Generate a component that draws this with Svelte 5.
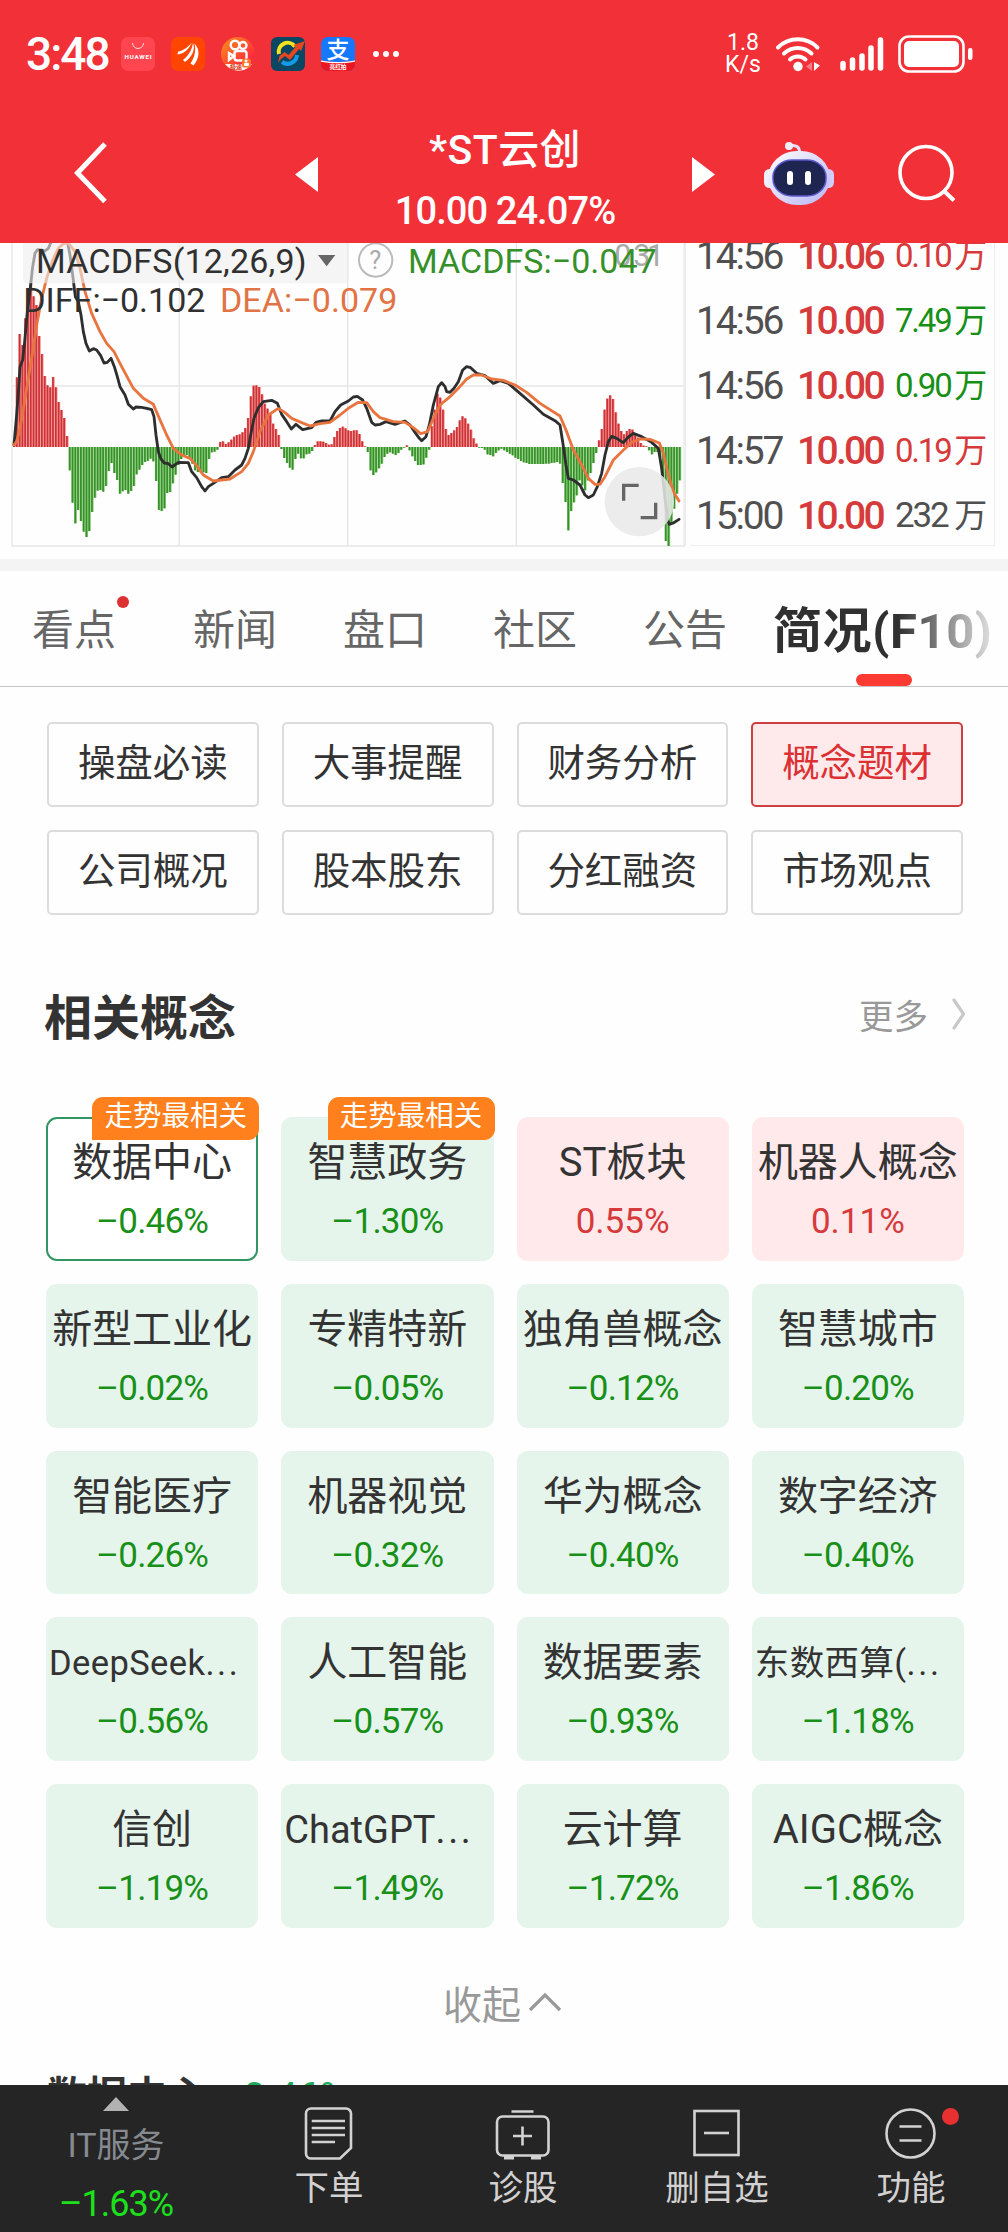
<script>
  // MACD histogram, one value per trading minute
  const bars = [
    20, 209, 339, 306, 386, 446, 491, 452, 426, 333, 279, 213, 185, 179, 210,
    179, 135, 111, 87, 33, -70, -167, -229, -189, -222, -254, -270, -252, -195,
    -152, -131, -129, -134, -117, -72, -48, -78, -99, -140, -133, -129, -140,
    -132, -117, -82, -68, -54, -45, -42, -35, -43, -102, -189, -192, -184, -138,
    -135, -109, -83, -54, -36, -28, -24, -30, -50, -70, -75, -76, -76, -78, -36,
    -16, -14, -8, 15, 17, 9, 14, 22, 31, 36, 38, 44, 57, 87, 152, 184, 185, 180,
    158, 130, 115, 100, 70, 54, 36, -6, -33, -48, -62, -68, -36, -20, -34, -34,
    -22, -20, -12, 6, 17, 17, 16, 12, 7, 8, 30, 48, 57, 61, 56, 50, 48, 50, 50,
    39, 17, 2, -15, -70, -84, -76, -64, -50, -30, -20, -16, -20, -24, -18, -8,
    -2, 5, -10, -28, -42, -54, -54, -52, -32, -8, 62, 112, 160, 148, 112, 54,
    36, 42, 50, 60, 80, 92, 86, 70, 52, 26, 10, -2, -3, -8, -22, -24, -28, -18,
    -10, -5, -10, -15, -20, -25, -32, -36, -42, -46, -48, -51, -51, -51, -51,
    -51, -51, -50, -50, -48, -47, -45, -50, -108, -165, -250, -192, -166, -145,
    -100, -115, -130, -100, -78, -48, -18, 20, 54, 112, 145, 155, 144, 104, 70,
    48, 38, 48, 54, 52, 40, 28, 12, 4, 2, -10, -22, -15, -15, -30, -100, -282,
    -297, -230, -185, -140, -100,
  ];
  const step = 1997 / (bars.length - 1);

  const diff =
    "42,630 50,540 56,460 60,395 68,375 74,320 82,230 92,150 98,95 105,55 112,44 125,45 135,48 145,40 152,24 175,-20 203,24 210,60 218,120 226,185 235,200 243,240 250,290 258,325 268,348 280,341 290,345 302,362 312,384 322,382 333,370 343,395 352,425 360,455 375,480 385,508 400,522 408,516 425,517 440,520 455,524 462,545 468,600 475,650 483,672 493,684 505,686 516,696 535,682 565,683 575,710 590,728 605,755 615,768 625,755 640,745 665,728 685,725 705,705 725,690 735,670 745,640 752,600 762,550 775,518 790,500 815,496 832,505 845,538 860,560 874,582 888,568 908,584 935,578 948,562 965,558 990,558 1005,530 1022,510 1045,498 1060,486 1072,484 1088,495 1100,520 1115,562 1125,570 1140,568 1158,560 1185,568 1215,558 1230,570 1245,592 1258,610 1265,617 1278,605 1288,570 1300,510 1315,455 1325,443 1335,455 1340,470 1350,472 1362,460 1375,440 1388,405 1400,395 1412,398 1430,415 1455,422 1480,445 1500,437 1525,445 1560,475 1600,510 1630,538 1665,557 1680,570 1688,620 1698,690 1705,730 1720,735 1740,750 1755,780 1765,788 1780,780 1792,755 1805,715 1815,660 1825,620 1835,604 1850,610 1870,623 1885,606 1900,595 1925,605 1955,622 1975,640 1985,700 1995,790 2003,855 2008,868 2020,864 2037,853";
  const dea =
    "42,630 50,620 60,580 72,510 85,430 98,350 110,270 125,190 140,130 158,75 175,40 190,26 205,24 225,50 240,100 255,170 275,235 300,290 320,325 342,350 365,395 400,460 430,490 460,508 478,550 500,600 520,640 545,660 570,670 590,692 610,720 640,738 690,732 725,710 745,685 760,650 780,590 805,540 835,520 855,533 875,550 905,563 930,573 960,566 990,562 1020,540 1045,520 1075,502 1100,503 1120,530 1140,548 1180,560 1215,562 1240,578 1262,596 1283,590 1300,550 1320,510 1350,485 1375,460 1400,432 1420,420 1445,420 1475,432 1510,436 1545,450 1580,472 1620,505 1680,543 1700,590 1720,645 1745,690 1765,730 1785,748 1800,748 1815,725 1840,675 1865,650 1895,622 1920,612 1950,613 1978,624 1990,655 2005,720 2020,770 2037,798";

  const ticks = [
    { time: "14:56", price: "10.06", vol: "0.10", dir: "up" },
    { time: "14:56", price: "10.00", vol: "7.49", dir: "down" },
    { time: "14:56", price: "10.00", vol: "0.90", dir: "down" },
    { time: "14:57", price: "10.00", vol: "0.19", dir: "up" },
    { time: "15:00", price: "10.00", vol: "232", dir: "flat" },
  ];

  const tabs = ["看点", "新闻", "盘口", "社区", "公告"];
  const sections = [
    "操盘必读",
    "大事提醒",
    "财务分析",
    "概念题材",
    "公司概况",
    "股本股东",
    "分红融资",
    "市场观点",
  ];

  const concepts = [
    { name: "数据中心", pct: "-0.46%", top: true, selected: true },
    { name: "智慧政务", pct: "-1.30%", top: true },
    { name: "ST板块", pct: "0.55%" },
    { name: "机器人概念", pct: "0.11%" },
    { name: "新型工业化", pct: "-0.02%" },
    { name: "专精特新", pct: "-0.05%" },
    { name: "独角兽概念", pct: "-0.12%" },
    { name: "智慧城市", pct: "-0.20%" },
    { name: "智能医疗", pct: "-0.26%" },
    { name: "机器视觉", pct: "-0.32%" },
    { name: "华为概念", pct: "-0.40%" },
    { name: "数字经济", pct: "-0.40%" },
    { name: "DeepSeek", pct: "-0.56%", fit: "small" },
    { name: "人工智能", pct: "-0.57%" },
    { name: "数据要素", pct: "-0.93%" },
    { name: "东数西算(", pct: "-1.18%", fit: "small" },
    { name: "信创", pct: "-1.19%" },
    { name: "ChatGPT", pct: "-1.49%", fit: "medium" },
    { name: "云计算", pct: "-1.72%" },
    { name: "AIGC概念", pct: "-1.86%" },
  ];
</script>

<div class="screen">
  <header>
    <div class="status">
      <span class="clock">3:48</span>
      <div class="apps">
        <svg width="34" height="34" viewBox="0 0 34 34">
          <rect width="34" height="34" rx="7" fill="#ff4650" />
          <path d="M11.5 6a5.5 5.5 0 0 0 11 0" fill="none" stroke="#ffd5d5" stroke-width="1" />
          <text x="3.5" y="22" font-size="6.2" font-weight="700" fill="#fff" textLength="27">HUAWEI</text>
        </svg>
        <svg width="34" height="34" viewBox="0 0 34 34">
          <rect width="34" height="34" rx="7" fill="#ff4500" />
          <path d="M6.5 17.5 7 14.500C12 14 17 10 21 5.500 18 12 13 17 6.500 17.500ZM12 23C17 19 21 13 22 6c3 7-2 15-8 19ZM19.500 26.500C24 20 25 13 23.500 6.500c6 6 5 15-1 22Z" fill="#fff" />
        </svg>
        <svg width="34" height="34" viewBox="0 0 34 34">
          <defs>
            <linearGradient id="ks" x1="0" y1="0" x2="1" y2="1">
              <stop offset="0" stop-color="#ff9418" />
              <stop offset="0.75" stop-color="#ff2b3c" />
            </linearGradient>
          </defs>
          <circle cx="17" cy="17" r="17" fill="url(#ks)" />
          <path d="M4 27h27a17 17 0 0 1-24 3Z" fill="#fff3e8" />
          <g fill="none" stroke="#fff" stroke-width="2.4">
            <circle cx="14" cy="8" r="4.3" />
            <circle cx="22" cy="8.5" r="3.5" />
            <rect x="13.5" y="14" width="12" height="9.5" rx="2.5" />
            <path d="m13 19-5-3v7Z" />
          </g>
          <rect x="21" y="21.5" width="9" height="9" rx="2.5" fill="#ff762c" />
          <circle cx="25" cy="24" r="1.5" fill="#fff" />
          <rect x="23" y="26" width="5" height="3" rx="1" fill="#fff" />
          <text x="9" y="32" font-size="6" font-weight="700" fill="#d83a2a">极速</text>
        </svg>
        <svg width="34" height="34" viewBox="0 0 34 34">
          <rect width="34" height="34" rx="6" fill="#0b4663" />
          <path d="M24 9.5A9 9 0 0 0 8 17" fill="none" stroke="#f2e21f" stroke-width="4" />
          <path d="M26 18a9.5 9.5 0 0 1-15 7" fill="none" stroke="#159be6" stroke-width="4" />
          <path d="m7 26 1.500-7 5-4 4 3 7-8-2-2L34 4l-4 10-2-2-9 11-5-4-4 3Z" fill="#e64620" />
        </svg>
        <svg width="34" height="34" viewBox="0 0 34 34">
          <rect width="34" height="34" rx="7" fill="#1677ff" />
          <path d="M0 23.5q17 3 34 0V27a7 7 0 0 1-7 7H7a7 7 0 0 1-7-7Z" fill="#ec1620" />
          <path d="M0 23.5q17 3 34 0v1.300q-17 3-34 0Z" fill="#fff" />
          <text x="5.5" y="21" font-size="23" font-weight="500" fill="#fff">支</text>
          <text x="8.5" y="31.7" font-size="5.7" font-weight="700" fill="#fff">亮红拍</text>
        </svg>
      </div>
      <div class="more-dots"><i></i><i></i><i></i></div>
      <div class="speed"><span>1.8</span><span>K/s</span></div>
      <svg class="wifi" width="46" height="38" viewBox="0 0 46 38">
        <g fill="none" stroke="#fff" stroke-width="4" stroke-linecap="round">
          <path d="M3 12.5a28 28 0 0 1 39.500 0" />
          <path d="M9 18.5a20 20 0 0 1 27.500 0" />
          <path d="M15 24.5a11.500 11.500 0 0 1 15.500 0" />
        </g>
        <circle cx="23" cy="31.5" r="4.7" fill="#fff" />
        <path d="m31 31.5 6-4.500v9Z" fill="#fa7b80" />
        <path d="M39 27v9l6-5.500Z" fill="#fff" />
      </svg>
      <svg class="signal" width="46" height="36" viewBox="0 0 46 36">
        <g stroke="#fff" stroke-width="5.5" stroke-linecap="round">
          <path d="M4 27.5V32M13.500 24V32M23 20V32M32 12V32M41.500 4V32" />
        </g>
      </svg>
      <svg class="battery" width="76" height="40" viewBox="0 0 76 40">
        <rect x="1.5" y="2.5" width="64" height="35" rx="9.5" fill="none" stroke="#fff" stroke-width="2.6" />
        <rect x="6" y="7" width="55" height="26" rx="5" fill="#fff" />
        <rect x="70" y="14" width="4.5" height="12" rx="2.2" fill="#fff" />
      </svg>
    </div>

    <div class="nav">
      <svg class="back" width="36" height="64" viewBox="0 0 36 64">
        <path d="M32 3 4.500 32 32 60.500" fill="none" stroke="#fff" stroke-width="5" />
      </svg>
      <svg class="prev" width="23" height="35" viewBox="0 0 23 35"><path d="M0 17.500 23 0v35Z" fill="#fff" /></svg>
      <div class="stock">
        <div class="name">*ST云创</div>
        <div class="quote">10.00 24.07%</div>
      </div>
      <svg class="next" width="23" height="35" viewBox="0 0 23 35"><path d="M23 17.500 0 0v35Z" fill="#fff" /></svg>
      <svg class="robot" width="70" height="66" viewBox="0 0 70 66">
        <defs>
          <linearGradient id="head" x1="0" y1="0" x2="1" y2="1">
            <stop offset="0" stop-color="#fff" />
            <stop offset="1" stop-color="#b9b4f4" />
          </linearGradient>
        </defs>
        <path d="M25 6q11-3 11 9" fill="none" stroke="#e6e2fb" stroke-width="3" />
        <circle cx="25" cy="6" r="4" fill="#f1effd" />
        <rect x="0" y="29" width="12" height="19" rx="5.5" fill="#f1effd" />
        <rect x="58" y="29" width="12" height="19" rx="5.5" fill="#cfcdfa" />
        <rect x="4" y="11" width="62" height="54" rx="29" ry="27" fill="url(#head)" />
        <rect x="9" y="20" width="53" height="36" rx="19" ry="17" fill="#1d2550" stroke="#5c58cf" stroke-width="1.5" />
        <rect x="23" y="31" width="6" height="14" rx="3" fill="#fff" />
        <rect x="41" y="31" width="6" height="14" rx="3" fill="#fff" />
      </svg>
      <svg class="search" width="60" height="60" viewBox="0 0 60 60">
        <circle cx="29" cy="29.5" r="26" fill="none" stroke="#fff" stroke-width="3.6" />
        <path d="m46 47 11 10.500" stroke="#fff" stroke-width="4" />
      </svg>
    </div>
  </header>

  <section class="market">
    <svg class="chart" width="690" height="305" viewBox="0 24 2070 915">
      <g fill="none" stroke="#e6e6e6" stroke-width="4">
        <path d="M36 24V933H2055M36 453H2055M538 24V933M1043 24V933M1549 24V933" />
        <path d="M2054 24V933" stroke-width="8" stroke="#ececec" />
      </g>
      {#each bars as v, i}
        <rect
          x={38.5 + i * step}
          y={v > 0 ? 636 - v : 636}
          width="8.4"
          height={Math.abs(v)}
          fill={v > 0 ? "#f58886" : "#8fce7d"}
        />
        <rect
          x={39.5 + i * step}
          y={v > 0 ? 636 - v : 636}
          width="5"
          height={Math.abs(v)}
          fill={v > 0 ? "#cb3237" : "#36902a"}
        />
      {/each}
      <polyline points={diff} class="line" stroke="#2e2e2e" />
      <polyline points={dea} class="line" stroke="#e8743f" />

      <rect x="69" y="14" width="979" height="131" rx="14" fill="#eee" opacity="0.6" />
      <text x="1843" y="94" font-size="92" fill="#aaa" textLength="150">0.31</text>
      <text x="108" y="115" class="label" fill="#303030" textLength="812">MACDFS(12,26,9)</text>
      <path d="M954 60h52l-26 34Z" fill="#666" />
      <circle cx="1127" cy="75" r="50" fill="none" stroke="#bbb" stroke-width="6" />
      <text x="1108" y="102" font-size="76" fill="#aaa">?</text>
      <text x="1224" y="113" class="label" fill="#36902a" textLength="746">MACDFS:−0.047</text>
      <text x="70" y="231" class="label" fill="#303030" textLength="546">DIFF:−0.102</text>
      <text x="660" y="231" class="label" fill="#e27345" textLength="532">DEA:−0.079</text>

      <circle cx="1918" cy="800" r="104" fill="#e9e9e9" opacity="0.86" />
      <path d="M1871 797v-46h45M1967 803v45h-45" fill="none" stroke="#666" stroke-width="10" />
    </svg>

    <div class="ticks">
      {#each ticks as t}
        <div class="tick">
          <span class="time">{t.time}</span>
          <span class="price">{t.price}</span>
          <span class="vol {t.dir}">{t.vol}<b>万</b></span>
        </div>
      {/each}
    </div>
  </section>

  <nav class="tabs">
    {#each tabs as tab, i}
      <span class="tab">{tab}{#if i === 0}<i class="dot"></i>{/if}</span>
    {/each}
    <span class="tab active">简况(F10)</span>
  </nav>

  <div class="sections">
    {#each sections as s}
      <div class="chip" class:active={s === "概念题材"}>{s}</div>
    {/each}
  </div>

  <div class="heading">
    <h2>相关概念</h2>
    <span class="more">更多</span>
    <svg width="14" height="34" viewBox="0 0 14 34">
      <path d="M2 3 11.500 17 2 31" fill="none" stroke="#c8c8c8" stroke-width="3.2" stroke-linecap="round" />
    </svg>
  </div>

  <div class="concepts">
    {#each concepts as c}
      <div class="card" class:up={!c.pct.startsWith("-")} class:selected={c.selected}>
        <div class="title {c.fit ?? ''}">{c.name}{#if c.fit}<i>...</i>{/if}</div>
        <div class="pct">{c.pct.replace("-", "–")}</div>
        {#if c.top}<span class="badge">走势最相关</span>{/if}
      </div>
    {/each}
  </div>

  <div class="collapse">
    收起
    <svg width="34" height="20" viewBox="0 0 34 20">
      <path d="M2 18 17 3 32 18" fill="none" stroke="#999" stroke-width="3.2" />
    </svg>
  </div>

  <div class="peek">
    <b>数据中心</b>
    <span>–0.46%</span>
  </div>

  <footer>
    <div class="industry">
      <svg width="26" height="14" viewBox="0 0 26 14"><path d="M13 0 26 14H0Z" fill="#b2b2b2" /></svg>
      <span class="ind-name">IT服务</span>
      <span class="ind-pct">–1.63%</span>
    </div>
    <div class="action">
      <svg width="60" height="64" viewBox="0 0 60 64">
        <path d="M12 8.500h35a5 5 0 0 1 5 5V48L41 58.500H12a5 5 0 0 1-5-5v-40a5 5 0 0 1 5-5Z" />
        <path d="M12.700 21H46M12.700 28H46M12.700 35H46M12.700 42H36" />
      </svg>
      <span>下单</span>
    </div>
    <div class="action">
      <svg width="60" height="64" viewBox="0 0 60 64">
        <rect x="4" y="16.5" width="51.5" height="39" rx="5.5" />
        <path d="M18.500 11.500h22M20 36h19M29.500 26.500v19" />
        <path d="M11 57.500h10M38 57.500h10" stroke-width="4" />
      </svg>
      <span>诊股</span>
    </div>
    <div class="action">
      <svg width="60" height="64" viewBox="0 0 60 64">
        <rect x="7.5" y="11" width="44" height="44" />
        <path d="M17 33h25" />
      </svg>
      <span>删自选</span>
    </div>
    <div class="action">
      <svg width="60" height="64" viewBox="0 0 60 64">
        <circle cx="29.5" cy="33.5" r="24" />
        <path d="M18.500 26.500h22M18.500 40.500h22" />
      </svg>
      <span>功能</span>
      <i class="dot"></i>
    </div>
  </footer>
</div>

<style>
  :global(body) {
    background: #fff;
  }

  .screen {
    width: 1008px;
    height: 2232px;
    overflow: hidden;
    display: flex;
    flex-direction: column;
    background: #fefefe;
    color: #333;
    font-family: Roboto, "Noto Sans CJK SC", sans-serif;
    white-space: nowrap;
  }

  .screen > * {
    flex-shrink: 0;
  }

  svg {
    display: block;
    flex-shrink: 0;
  }

  /* header */
  header {
    height: 243px;
    background: #f13038;
    color: #fff;
  }

  .status {
    display: flex;
    align-items: center;
    height: 108px;
    padding-left: 26px;
  }

  .clock {
    width: 95px;
    font-size: 46px;
    font-weight: 500;
    letter-spacing: -2px;
  }

  .apps {
    display: flex;
    gap: 16px;
  }

  .more-dots {
    display: flex;
    gap: 4px;
    margin-left: 18px;
  }

  .more-dots i {
    width: 6px;
    height: 6px;
    border-radius: 50%;
    background: #fff;
  }

  .speed {
    display: flex;
    flex-direction: column;
    align-items: center;
    width: 38px;
    margin-left: 325px;
    font-size: 23px;
    font-weight: 400;
    line-height: 22px;
  }

  .wifi {
    margin-left: 13px;
  }

  .signal {
    margin-left: 18px;
  }

  .battery {
    margin-left: 13px;
  }

  .nav {
    display: flex;
    align-items: center;
    height: 130px;
  }

  .back {
    margin-left: 73px;
  }

  .prev {
    margin: 2px 0 0 186px;
  }

  .stock {
    width: 374px;
    padding-top: 13px;
    text-align: center;
  }

  .name {
    font-size: 41px;
    font-weight: 500;
    line-height: 62px;
    letter-spacing: 0.4px;
  }

  .quote {
    font-size: 38px;
    font-weight: 500;
    line-height: 60px;
    letter-spacing: -0.9px;
  }

  .next {
    margin-top: 2px;
  }

  .robot {
    margin-left: 49px;
  }

  .search {
    margin-left: 63px;
  }

  /* chart and ticks */
  .market {
    display: flex;
    height: 316px;
    overflow: hidden;
  }

  .line {
    fill: none;
    stroke-width: 8.5;
    stroke-linejoin: round;
    stroke-linecap: round;
  }

  .label {
    font-size: 102px;
    font-weight: 400;
  }

  .ticks {
    width: 305px;
    height: 303px;
    box-sizing: border-box;
    border-right: 1px solid #eee;
    border-bottom: 1px solid #eee;
    overflow: hidden;
  }

  .tick {
    display: grid;
    grid-template-columns: 101px 98px 98px;
    align-items: center;
    height: 65px;
    padding-left: 6px;
    color: #505050;
    font-size: 39px;
    font-weight: 400;
    letter-spacing: -2.2px;
  }

  .tick:first-child {
    margin-top: -20px;
  }

  .price {
    color: #d63a3b;
    font-weight: 500;
    letter-spacing: -2.7px;
  }

  .vol {
    display: flex;
    align-items: center;
    justify-content: space-between;
    width: 90px;
    font-size: 33px;
  }

  .vol.flat {
    font-size: 35px;
  }

  .vol b {
    margin-left: -2px;
    font-size: 33px;
    font-weight: 400;
    line-height: 40px;
  }

  .up {
    color: #d63a3b;
  }

  .down {
    color: #189018;
  }

  /* tabs */
  .tabs {
    position: relative;
    display: flex;
    align-items: center;
    height: 111px;
    padding: 0 0 4px 32px;
    border-top: 12px solid #f4f4f4;
    border-bottom: 1px solid #c4c4c4;
    font-size: 42px;
    color: #666;
  }

  .tabs::after {
    content: "";
    position: absolute;
    top: 0;
    right: 0;
    width: 110px;
    height: 100px;
    background: linear-gradient(to right, rgba(254, 254, 254, 0), #fefefe);
  }

  .tab {
    position: relative;
    width: 150px;
  }

  .tab:first-child {
    width: 161px;
  }

  .tab:nth-child(5) {
    width: 130px;
  }

  .tab.active {
    width: 220px;
    font-size: 49px;
    font-weight: 700;
    color: #303030;
    letter-spacing: 0.6px;
  }

  .tab.active::after {
    content: "";
    position: absolute;
    bottom: -24px;
    left: 83px;
    width: 56px;
    height: 12px;
    border-radius: 6px;
    background: #fb3b32;
  }

  .tab .dot {
    position: absolute;
    top: 0;
    left: 85px;
    width: 12px;
    height: 12px;
    border-radius: 50%;
    background: #dc3032;
  }

  .sections {
    display: grid;
    grid-template-columns: repeat(4, 1fr);
    gap: 23px;
    padding: 35px 45px 0 47px;
  }

  .chip {
    height: 85px;
    box-sizing: border-box;
    border: 2px solid #dcdcdc;
    border-radius: 5px;
    font-size: 37.5px;
    line-height: 78px;
    text-align: center;
  }

  .chip.active {
    border-color: #cc3f42;
    background: #feeaeb;
    color: #dc3033;
  }

  /* related concepts */
  .heading {
    display: flex;
    align-items: center;
    height: 94px;
    padding: 52px 42px 6px 44px;
  }

  h2 {
    flex: 1;
    margin: 0;
    font-size: 48px;
    font-weight: 700;
  }

  .more {
    margin-right: 24px;
    font-size: 34.5px;
    color: #999;
  }

  .concepts {
    display: grid;
    grid-template-columns: repeat(4, 1fr);
    gap: 23px;
    padding: 50px 44px 0 46px;
  }

  .card {
    position: relative;
    height: 143.8px;
    border-radius: 11px;
    background: #e5f5eb;
    color: #189018;
    text-align: center;
  }

  .card.up {
    background: #ffe9eb;
    color: #d63a3b;
  }

  .card.selected {
    background: #fff;
    box-shadow: inset 0 0 0 2px #329664;
  }

  .title {
    padding-top: 16px;
    color: #333;
    font-size: 40px;
    line-height: 60px;
  }

  .title i {
    font-style: normal;
    letter-spacing: 2.6px;
  }

  .title.small {
    padding-left: 3px;
    font-size: 34.5px;
    text-align: left;
    letter-spacing: 0.4px;
  }

  .title.medium {
    padding-left: 3px;
    font-size: 38px;
    text-align: left;
  }

  .pct {
    font-size: 35px;
    line-height: 57px;
    letter-spacing: -0.8px;
  }

  .card.up .pct {
    letter-spacing: 0;
  }

  .badge {
    position: absolute;
    top: -20px;
    right: -1px;
    width: 167px;
    height: 43px;
    border-radius: 11px 11px 11px 0;
    background: #ff801c;
    color: #fff;
    font-size: 28.5px;
    line-height: 40px;
  }

  .collapse {
    display: flex;
    align-items: center;
    gap: 7px;
    height: 60px;
    margin-top: 44px;
    padding-left: 443px;
    font-size: 39px;
    color: #999;
  }

  .peek {
    display: flex;
    align-items: center;
    gap: 11px;
    height: 52px;
    margin-top: 39px;
    padding-left: 47px;
    margin-bottom: -38px;
    font-size: 40px;
    line-height: 52px;
  }

  .peek span {
    color: #22a85c;
    font-size: 39px;
  }

  /* bottom bar */
  footer {
    position: relative;
    display: flex;
    height: 147px;
    background: #252525;
    color: #d2d0d1;
  }

  .industry {
    display: flex;
    flex-direction: column;
    align-items: center;
    width: 232px;
    padding-top: 12px;
  }

  .ind-name {
    margin-top: 9px;
    color: #858a90;
    font-size: 34px;
    line-height: 50px;
  }

  .ind-pct {
    margin-top: 7px;
    color: #1de01d;
    font-size: 36px;
    line-height: 54px;
    letter-spacing: -1px;
  }

  .action {
    position: relative;
    display: flex;
    flex-direction: column;
    align-items: center;
    width: 194px;
    padding-top: 15px;
    font-size: 34.5px;
    line-height: 48px;
  }

  .action svg {
    fill: none;
    stroke: #d2d2d2;
    stroke-width: 2.6;
  }

  .action .dot {
    position: absolute;
    top: 23px;
    left: 128px;
    width: 17px;
    height: 17px;
    border-radius: 50%;
    background: #e83030;
  }
</style>
